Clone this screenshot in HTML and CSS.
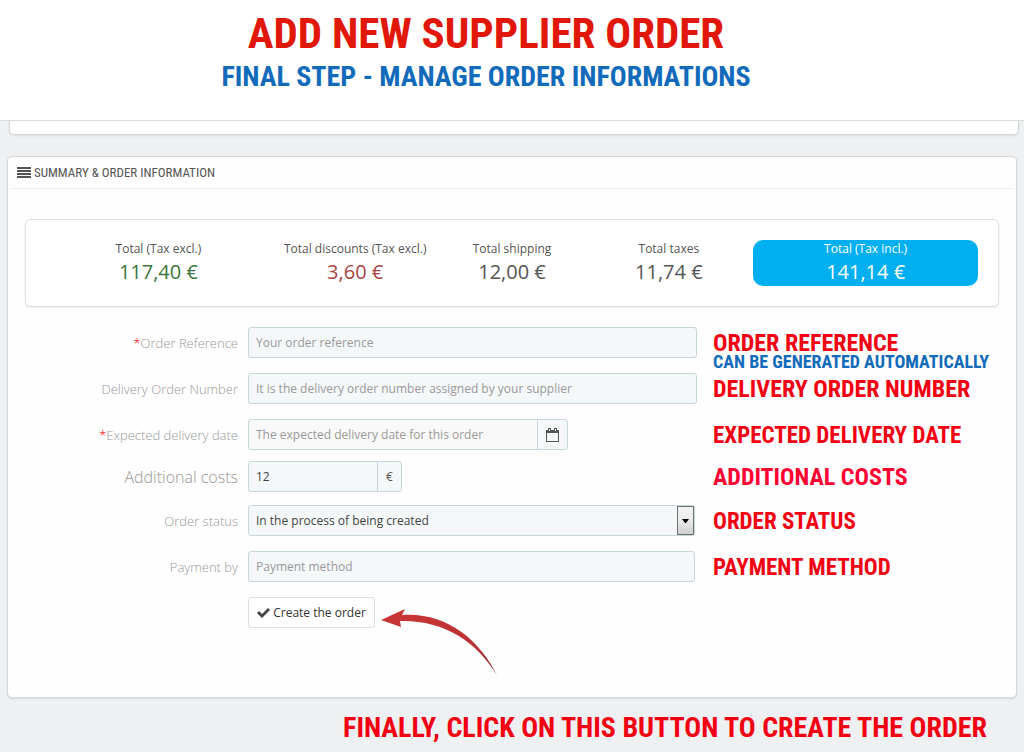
FILE: index.html
```html
<!DOCTYPE html>
<html lang="en">
<head>
<meta charset="utf-8">
<title>Add new supplier order</title>
<meta name="viewport" content="width=device-width, initial-scale=1">
<link rel="stylesheet" href="styles.css">
</head>
<body>
<header class="banner">
  <h1 class="banner-title">ADD NEW SUPPLIER ORDER</h1>
  <p class="banner-subtitle">FINAL STEP - MANAGE ORDER INFORMATIONS</p>
</header>
<main>
  <div class="panel-end"></div>
  <section class="panel">
    <h2 class="panel-heading">
      <svg class="icon-list" width="14" height="12" viewBox="0 0 14 12" aria-hidden="true"><path fill="currentColor" d="M0 0h14v2H0zM0 3h14v2H0zM0 6h14v2H0zM0 9h14v2H0z"/></svg>
      SUMMARY &amp; ORDER INFORMATION
    </h2>
    <div class="totals">
      <div class="total total-first"><span class="total-label">Total (Tax excl.)</span><span class="total-value positive">117,40 €</span></div>
      <div class="total"><span class="total-label">Total discounts (Tax excl.)</span><span class="total-value negative">3,60 €</span></div>
      <div class="total"><span class="total-label">Total shipping</span><span class="total-value">12,00 €</span></div>
      <div class="total"><span class="total-label">Total taxes</span><span class="total-value">11,74 €</span></div>
      <div class="total total-final"><span class="total-label">Total (Tax incl.)</span><span class="total-value">141,14 €</span></div>
    </div>
    <form class="order-form">
      <div class="row">
        <label class="label" for="reference"><span class="required">*</span>Order Reference</label>
        <input class="control" id="reference" type="text" placeholder="Your order reference">
        <div class="note note-double">ORDER REFERENCE<span class="note-sub">CAN BE GENERATED AUTOMATICALLY</span></div>
      </div>
      <div class="row">
        <label class="label" for="delivery">Delivery Order Number</label>
        <input class="control" id="delivery" type="text" placeholder="It is the delivery order number assigned by your supplier">
        <div class="note">DELIVERY ORDER NUMBER</div>
      </div>
      <div class="row row-tight">
        <label class="label" for="date"><span class="required">*</span>Expected delivery date</label>
        <div class="group group-date">
          <input class="control control-pale" id="date" type="text" placeholder="The expected delivery date for this order">
          <button class="addon" type="button" aria-label="Choose a date"><svg width="13" height="14" viewBox="0 0 13 14" aria-hidden="true"><path fill="currentColor" fill-rule="evenodd" d="M0 2h2V0h3v2h3V0h3v2h2v12H0zM1 5v8h11V5zM3 1v2h1V1zM9 1v2h1V1z"/></svg></button>
        </div>
        <div class="note note-small">EXPECTED DELIVERY DATE</div>
      </div>
      <div class="row row-snug">
        <label class="label label-large" for="costs">Additional costs</label>
        <div class="group group-costs">
          <input class="control" id="costs" type="text" value="12">
          <span class="addon addon-currency">€</span>
        </div>
        <div class="note note-costs">ADDITIONAL COSTS</div>
      </div>
      <div class="row">
        <label class="label" for="status">Order status</label>
        <div class="select-wrap">
          <select class="control select" id="status"><option>In the process of being created</option></select>
          <span class="select-arrow" aria-hidden="true"><svg width="7" height="4" viewBox="0 0 7 4"><path d="M0 0h7L4 4H3z"/></svg></span>
        </div>
        <div class="note note-small">ORDER STATUS</div>
      </div>
      <div class="row">
        <label class="label" for="payment">Payment by</label>
        <input class="control control-short" id="payment" type="text" placeholder="Payment method">
        <div class="note note-small">PAYMENT METHOD</div>
      </div>
      <div class="row">
        <div class="actions">
          <button class="submit" type="submit"><svg width="13" height="10" viewBox="0 0 13 10" aria-hidden="true"><path fill="#444" d="M0 5l2-2 3 3 6-6 2 2-8 8z"/></svg>Create the order</button>
          <svg class="pointer" width="118" height="70" viewBox="0 0 118 70" aria-hidden="true"><defs><linearGradient id="fade" x1="0" y1="0" x2="1" y2="1"><stop offset="0" stop-color="#cb3535"/><stop offset=".7" stop-color="#b93235"/><stop offset=".9" stop-color="#8f3035"/><stop offset="1" stop-color="#8f3035" stop-opacity=".2"/></linearGradient></defs><path fill="url(#fade)" d="M0 12L24 1l-3 6C64 4 98 30 117 69C95 32 62 12 19 13l1 6z"/></svg>
        </div>
      </div>
    </form>
  </section>
</main>
<footer class="closing">FINALLY, CLICK ON THIS BUTTON TO CREATE THE ORDER</footer>
</body>
</html>
```
FILE: styles.css
```css
* { box-sizing: border-box; }
body {
  margin: 0;
  background: #eff0f2;
  color: #555;
  font: 12px/18px "Open Sans", sans-serif;
}
.banner {
  background: #fff;
  border-bottom: 1px solid #dcdddf;
  padding: 9px 52px 25px 0;
  text-align: center;
  font-family: "Roboto Condensed", "Liberation Sans Narrow", sans-serif;
  font-weight: 700;
}
.banner-title { margin: 0; color: #e11709; font-size: 43px; line-height: 48px; }
.banner-subtitle { margin: 0; padding-top: 2px; color: #116bba; font-size: 28px; line-height: 36px; }
.panel-end {
  height: 14px;
  margin: 0 5px 21px 9px;
  background: #fff;
  border: 1px solid #d3d8db;
  border-top: 0;
  border-radius: 0 0 5px 5px;
  box-shadow: 0 1px 2px rgba(0, 0, 0, .08);
}
.panel {
  margin: 0 7px;
  padding-bottom: 19px;
  background: #fefefe;
  border: 1px solid #d3d8db;
  border-radius: 5px;
  box-shadow: 0 1px 2px rgba(0, 0, 0, .1);
}
.panel-heading {
  display: flex;
  align-items: center;
  gap: 3px;
  height: 32px;
  margin: 0 4px 30px;
  padding-left: 5px;
  border-bottom: 1px solid #ebeced;
  font: 400 13px/20px "Roboto Condensed", "Liberation Sans Narrow", sans-serif;
}
.totals {
  display: grid;
  grid-template-columns: 231fr 157fr 157fr 157fr 231fr;
  margin: 0 17px 20px;
  padding: 20px;
  background: #fff;
  border: 1px solid #dcdddf;
  border-radius: 5px;
  box-shadow: 0 1px 2px rgba(0, 0, 0, .06);
}
.total { text-align: center; white-space: nowrap; }
.total-first { margin-right: 6px; }
.total-final { margin-left: 6px; border-radius: 10px; background: #00aff0; color: #fff; }
.total-label, .total-value { display: block; }
.total-value { font-size: 20px; line-height: 28px; }
.positive { color: #3c763d; }
.negative { color: #a94442; }
.row {
  display: grid;
  grid-template-columns: 230px minmax(0, 449fr) minmax(0, 309fr);
  column-gap: 10px;
  align-items: start;
  min-height: 46px;
}
.row-tight { min-height: 42px; }
.row-snug { min-height: 44px; }
.label { color: #999; font-size: 13px; font-weight: 300; line-height: 32px; text-align: right; }
.label-large { font-size: 16px; }
.required { color: #f00; }
.control {
  width: 100%;
  height: 31px;
  padding: 0 7px;
  border: 1px solid #c7d6db;
  border-radius: 3px;
  background: #f5f8f9;
  color: #444;
  font: 12px/18px "Open Sans", sans-serif;
}
.control::placeholder { color: #999; opacity: 1; }
.control-pale { background: #f9f9f9; }
.control-short, .select-wrap { width: calc(100% - 2px); }
.group { display: flex; }
.group .control { flex: 1; min-width: 0; border-radius: 3px 0 0 3px; }
.group-date { width: 320px; }
.group-costs { width: 154px; }
.addon {
  display: flex;
  align-items: center;
  justify-content: center;
  width: 31px;
  height: 31px;
  margin-left: -1px;
  padding: 0;
  border: 1px solid #c7d6db;
  border-radius: 0 3px 3px 0;
  background: #f5f8f9;
  color: #555;
}
.addon-currency { width: 25px; }
.select-wrap { position: relative; }
.select { appearance: none; display: block; }
.select-arrow {
  position: absolute;
  top: 1px;
  right: 1px;
  bottom: 1px;
  display: flex;
  align-items: center;
  justify-content: center;
  width: 17px;
  border: 1px solid #707070;
  background: linear-gradient(#f2f2f2, #ebebeb 50%, #cfcfcf);
  pointer-events: none;
}
.note {
  padding-left: 6px;
  color: #f20012;
  font: 700 24px/33px "Roboto Condensed", "Liberation Sans Narrow", sans-serif;
  white-space: nowrap;
}
.note-small { font-size: 23px; }
.note-double { padding-top: 6px; line-height: 20px; }
.note-sub { display: block; color: #116bba; font-size: 18px; line-height: 18px; }
.note-costs { color: #ff0033; }
.actions { grid-column: 2; display: flex; align-items: flex-start; gap: 6px; }
.submit {
  display: flex;
  align-items: center;
  justify-content: center;
  gap: 3px;
  width: 127px;
  height: 31px;
  padding: 0;
  border: 1px solid #dcdddf;
  border-radius: 3px;
  background: #fff;
  color: #333;
  font: 12px/18px "Open Sans", sans-serif;
  white-space: nowrap;
}
.pointer { flex: none; margin-top: 11px; }
.closing {
  padding: 12px 37px 8px;
  color: #f20012;
  font: 700 28px/36px "Roboto Condensed", "Liberation Sans Narrow", sans-serif;
  text-align: right;
}
```
